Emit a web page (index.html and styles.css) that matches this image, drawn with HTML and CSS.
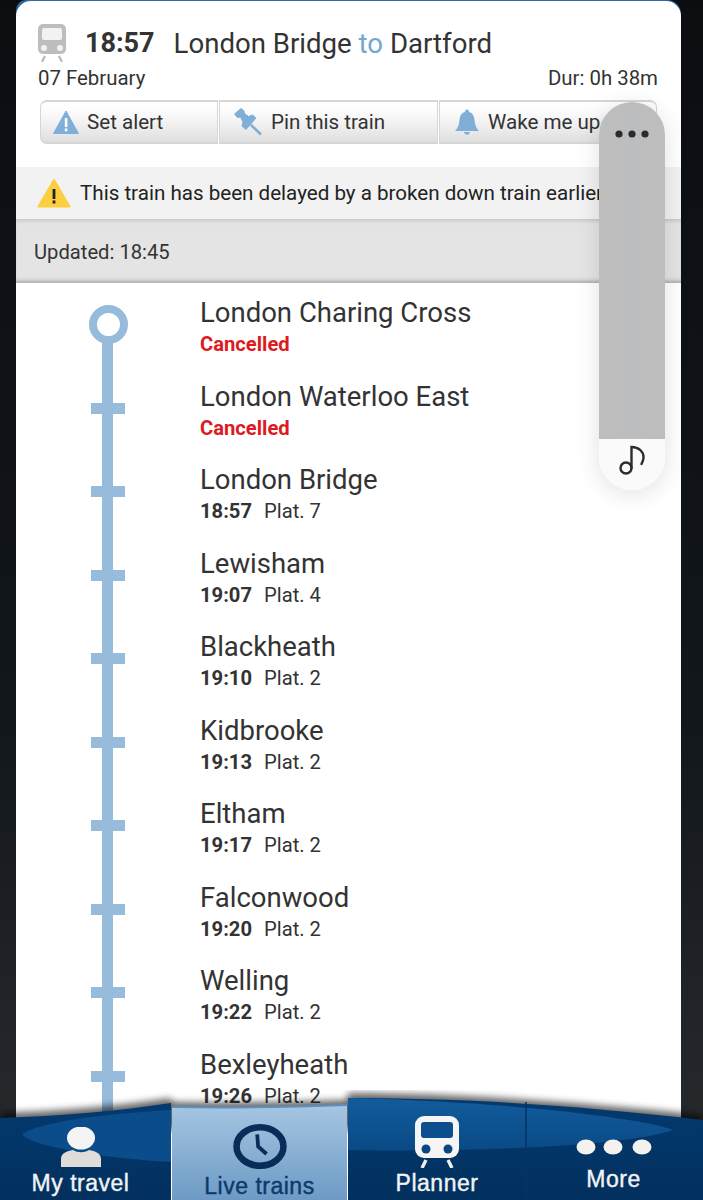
FILE: index.html
```html
<!doctype html>
<html>
    <head>
        <title>Live train</title>
        <meta charset="utf-8">
        <meta name="viewport" content="width=device-width">
        <link rel="stylesheet" href="styles.css">
    </head>

    <body>
        <div class="shell">
            <div class="card">
                <header class="head">
                    <div class="title-row">
                        <svg class="train-icon" viewBox="0 0 28 38" width="28" height="38">
                            <rect x="0" y="0" width="28" height="30" rx="5" fill="#bdbdbd"/>
                            <rect x="4" y="4" width="20" height="12" rx="2" fill="#f2f2f2"/>
                            <circle cx="6" cy="24" r="3" fill="#f2f2f2"/>
                            <circle cx="22" cy="24" r="3" fill="#f2f2f2"/>
                            <path d="M7 32 L4 38 M21 32 L24 38" stroke="#bdbdbd" stroke-width="2.4" fill="none"/>
                        </svg>
                        <strong class="dep-time">18:57</strong>
                        <span class="route">London Bridge <span class="to">to</span> Dartford</span>
                    </div>
                    <div class="date-row">
                        <span>07 February</span>
                        <span>Dur: 0h 38m</span>
                    </div>
                    <div class="actions">
                        <div class="action action-alert">
                            <svg viewBox="0 0 26 24" width="26" height="24">
                                <path d="M13 1 L25.5 23.5 H0.5 Z" fill="#7fafd6" stroke="#7fafd6" stroke-linejoin="round"/>
                                <rect x="11.8" y="8" width="2.6" height="9" fill="#fff"/>
                                <rect x="11.8" y="18.5" width="2.6" height="2.8" fill="#fff"/>
                            </svg>
                            <span>Set alert</span>
                        </div>
                        <div class="action action-pin">
                            <svg viewBox="0 0 28 28" width="28" height="28">
                                <path d="M7 0.5 L0.5 6 L3.5 9.5 L6.5 9 L9 14 L8 18 L12 21.5 L22 10 L18.5 7 L14.5 8.5 L10.5 5.5 L10 3 Z" fill="#7fafd6" stroke="#7fafd6" stroke-linejoin="round"/>
                                <path d="M17 17 L27 26.5" stroke="#7fafd6" stroke-width="2.6" fill="none"/>
                            </svg>
                            <span>Pin this train</span>
                        </div>
                        <div class="action action-wake">
                            <svg viewBox="0 0 26 26" width="26" height="26">
                                <path d="M13 0.5 C11.5 0.5 11 1.6 11 3 C7 4 6 7 5.5 11 C5 16 4 19 1 22 H25 C22 19 21 16 20.5 11 C20 7 19 4 15 3 C15 1.6 14.5 0.5 13 0.5 Z" fill="#7fafd6"/>
                                <path d="M10 23 C10.5 26.5 15.5 26.5 16 23 Z" fill="#7fafd6"/>
                            </svg>
                            <span>Wake me up</span>
                        </div>
                    </div>
                </header>

                <div class="notice">
                    <svg viewBox="0 0 34 30" width="34" height="30">
                        <path d="M17 2 L32.5 28.5 H1.5 Z" fill="#fbcf3e" stroke="#fbcf3e" stroke-width="2" stroke-linejoin="round"/>
                        <rect x="15.6" y="11" width="2.8" height="10" fill="#222"/>
                        <rect x="15.6" y="22.5" width="2.8" height="3" fill="#222"/>
                    </svg>
                    <span>This train has been delayed by a broken down train earlier</span>
                </div>

                <div class="updated">Updated: 18:45</div>

                <div class="stops">
                    <div class="stop stop-first">
                        <div class="rail"><div class="ring"></div></div>
                        <div class="stop-info">
                            <div class="stop-name">London Charing Cross</div>
                            <div class="stop-sub cancelled">Cancelled</div>
                        </div>
                    </div>
                    <div class="stop">
                        <div class="rail"><div class="tick"></div></div>
                        <div class="stop-info">
                            <div class="stop-name">London Waterloo East</div>
                            <div class="stop-sub cancelled">Cancelled</div>
                        </div>
                    </div>
                    <div class="stop">
                        <div class="rail"><div class="tick"></div></div>
                        <div class="stop-info">
                            <div class="stop-name">London Bridge</div>
                            <div class="stop-sub"><b>18:57</b> Plat. 7</div>
                        </div>
                    </div>
                    <div class="stop">
                        <div class="rail"><div class="tick"></div></div>
                        <div class="stop-info">
                            <div class="stop-name">Lewisham</div>
                            <div class="stop-sub"><b>19:07</b> Plat. 4</div>
                        </div>
                    </div>
                    <div class="stop">
                        <div class="rail"><div class="tick"></div></div>
                        <div class="stop-info">
                            <div class="stop-name">Blackheath</div>
                            <div class="stop-sub"><b>19:10</b> Plat. 2</div>
                        </div>
                    </div>
                    <div class="stop">
                        <div class="rail"><div class="tick"></div></div>
                        <div class="stop-info">
                            <div class="stop-name">Kidbrooke</div>
                            <div class="stop-sub"><b>19:13</b> Plat. 2</div>
                        </div>
                    </div>
                    <div class="stop">
                        <div class="rail"><div class="tick"></div></div>
                        <div class="stop-info">
                            <div class="stop-name">Eltham</div>
                            <div class="stop-sub"><b>19:17</b> Plat. 2</div>
                        </div>
                    </div>
                    <div class="stop">
                        <div class="rail"><div class="tick"></div></div>
                        <div class="stop-info">
                            <div class="stop-name">Falconwood</div>
                            <div class="stop-sub"><b>19:20</b> Plat. 2</div>
                        </div>
                    </div>
                    <div class="stop">
                        <div class="rail"><div class="tick"></div></div>
                        <div class="stop-info">
                            <div class="stop-name">Welling</div>
                            <div class="stop-sub"><b>19:22</b> Plat. 2</div>
                        </div>
                    </div>
                    <div class="stop">
                        <div class="rail"><div class="tick"></div></div>
                        <div class="stop-info">
                            <div class="stop-name">Bexleyheath</div>
                            <div class="stop-sub"><b>19:26</b> Plat. 2</div>
                        </div>
                    </div>
                </div>
            </div>
        </div>

        <!-- floating overlay on top of the page -->
        <div class="bubble">
            <div class="bubble-top">
                <svg viewBox="0 0 36 10" width="36" height="10">
                    <circle cx="5" cy="5" r="3.6" fill="#2b2b2b"/>
                    <circle cx="18" cy="5" r="3.6" fill="#2b2b2b"/>
                    <circle cx="31" cy="5" r="3.6" fill="#2b2b2b"/>
                </svg>
            </div>
            <div class="bubble-bottom">
                <svg viewBox="0 0 26 30" width="26" height="30">
                    <circle cx="7" cy="23" r="5.5" fill="none" stroke="#2b2b2b" stroke-width="2.4"/>
                    <path d="M12.5 23 V2 C20 2 25 7 24.5 13 C24.3 15.5 23.5 17 22.5 19" fill="none" stroke="#2b2b2b" stroke-width="2.4" stroke-linecap="round"/>
                </svg>
            </div>
        </div>

        <nav class="tabbar">
            <svg class="tabbar-bg" viewBox="0 0 703 110" width="703" height="110">
                <defs>
                    <linearGradient id="navy" x1="0" y1="0" x2="0" y2="1">
                        <stop offset="0" stop-color="#033a70"/>
                        <stop offset="1" stop-color="#02305e"/>
                    </linearGradient>
                    <linearGradient id="gloss" x1="0" y1="0" x2="0" y2="1">
                        <stop offset="0" stop-color="#125c9c"/>
                        <stop offset="1" stop-color="#0a4a86"/>
                    </linearGradient>
                    <linearGradient id="sky" x1="0" y1="0" x2="0" y2="1">
                        <stop offset="0" stop-color="#a6c6e2"/>
                        <stop offset="1" stop-color="#6d9ac5"/>
                    </linearGradient>
                    <filter id="soft" x="-5%" y="-40%" width="110%" height="180%">
                        <feGaussianBlur stdDeviation="3.5"/>
                    </filter>
                </defs>
                <path d="M0 23 C60 21 120 16 171 8 L172 12 C230 13 290 12 347 10 L348 3 C450 3 570 11 703 25 V40 H0 Z" fill="#000" opacity="0.6" filter="url(#soft)"/>
                <path d="M0 28 C60 26 120 21 171 13 V110 H0 Z" fill="url(#navy)"/>
                <path d="M171 20 C100 24 40 32 22 44 C30 56 100 68 171 72 Z" fill="#0b4c8a"/>
                <path d="M348 8 C450 8 570 14 703 30 V110 H348 Z" fill="url(#navy)"/>
                <path d="M348 60 C450 62 620 58 673 40 C650 30 520 12 348 8 Z" fill="url(#gloss)"/>
                <path d="M172 17 C230 18 290 17 347 15 V110 H172 Z" fill="url(#sky)"/>
                <path d="M172 17 C230 18 290 17 347 15" fill="none" stroke="#5f8fbd" stroke-width="2"/>
                <path d="M526 12 V110" stroke="#03356a" stroke-width="2" opacity="0.8"/>
            </svg>
            <div class="tab tab-travel">
                <svg viewBox="0 0 42 40" width="42" height="40">
                    <ellipse cx="21" cy="11" rx="14" ry="11.5" fill="#f4f4f4"/>
                    <path d="M1 40 V32 C1 26 7 24 13 23 C18 26 24 26 29 23 C35 24 41 26 41 32 V40 Z" fill="#dfdcda"/>
                </svg>
                <span>My travel</span>
            </div>
            <div class="tab tab-live">
                <svg viewBox="0 0 58 48" width="58" height="48">
                    <ellipse cx="29" cy="24" rx="25" ry="20.5" fill="none" stroke="#0a2c58" stroke-width="7"/>
                    <path d="M26 11 L27 24 L36 32" fill="none" stroke="#0a2c58" stroke-width="4"/>
                </svg>
                <span>Live trains</span>
            </div>
            <div class="tab tab-planner">
                <svg viewBox="0 0 46 52" width="46" height="52">
                    <rect x="1" y="0" width="44" height="42" rx="9" fill="#f5f5f5"/>
                    <rect x="7" y="6" width="32" height="16" rx="3" fill="#0c4f8f"/>
                    <circle cx="12" cy="33" r="4.5" fill="#0c4680"/>
                    <circle cx="34" cy="33" r="4.5" fill="#0c4680"/>
                    <path d="M12 44 L8 52 M34 44 L38 52" stroke="#f0f0f0" stroke-width="3.4" fill="none"/>
                </svg>
                <span>Planner</span>
            </div>
            <div class="tab tab-more">
                <svg viewBox="0 0 76 16" width="76" height="16">
                    <ellipse cx="10" cy="8" rx="9.5" ry="7.5" fill="#f4f2ee"/>
                    <ellipse cx="37" cy="8" rx="9.5" ry="7.5" fill="#f4f2ee"/>
                    <ellipse cx="66" cy="8" rx="9.5" ry="7.5" fill="#f4f2ee"/>
                </svg>
                <span>More</span>
            </div>
        </nav>
    </body>
</html>
```

FILE: styles.css
```css
html, body {
    margin: 0;
    height: 1200px;
    overflow: hidden;
}
body {
    position: relative;
    width: 703px;
    background: linear-gradient(#0b0d11, #12171c 60%, #2a2c2f);
    font-family: Roboto, "Liberation Sans", sans-serif;
    color: #333;
}
.shell {
    width: 665px;
    margin-left: 16px;
    padding-top: 1px;
    background: linear-gradient(#33689c 0, #2368ad 18px, #fff 18px);
    border-radius: 10px 14px 0 0;
}
.card {
    background: white;
    border-radius: 15px 15px 0 0;
    height: 1199px;
}
.head {
    height: 166px;
    padding: 0 23px 0 22px;
    box-sizing: border-box;
}
.title-row {
    display: flex;
    align-items: center;
    height: 62px;
    padding-top: 22px;
    box-sizing: border-box;
}
.train-icon {
    margin-right: 19px;
}
.dep-time {
    font-size: 27px;
    font-weight: 700;
    margin-right: 19px;
}
.route {
    font-size: 27.6px;
}
.to {
    color: #74a7cf;
}
.date-row {
    display: flex;
    justify-content: space-between;
    font-size: 20.4px;
    line-height: 30px;
    height: 30px;
    margin-bottom: 7px;
}
.actions {
    display: flex;
    gap: 1px;
    margin-left: 2px;
    width: 617px;
    height: 44px;
}
.action {
    display: flex;
    align-items: center;
    gap: 8px;
    box-sizing: border-box;
    font-size: 20.6px;
    background: linear-gradient(#fff, #fafafa 30%, #dfdfdf);
    border: 2px solid #d6d6d6;
    border-left-width: 1px;
    border-right-width: 1px;
    color: #333;
}
.action-alert {
    width: 178px;
    padding-left: 12px;
    border-radius: 7px 0 0 7px;
}
.action-pin {
    width: 219px;
    padding-left: 14px;
    gap: 9px;
}
.action-wake {
    width: 218px;
    padding-left: 14px;
    border-radius: 0 7px 7px 0;
}
.notice {
    display: flex;
    align-items: center;
    gap: 9px;
    height: 52px;
    padding-left: 21px;
    background: #f2f2f2;
    font-size: 20.6px;
    white-space: nowrap;
    overflow: hidden;
    color: #222;
}
.updated {
    display: flex;
    align-items: center;
    height: 64px;
    box-sizing: border-box;
    padding: 2px 0 0 18px;
    font-size: 20.2px;
    background: #e4e4e4;
    box-shadow: inset 0 5px 5px -4px #bbb, inset 0 -5px 4px -3px #a6a6a6;
}
.stops {
    height: 840px;
    overflow: hidden;
    background: linear-gradient(#97bbdb, #97bbdb) 86px 42px / 11px 100% no-repeat;
}
.stop {
    display: flex;
    height: 83.5px;
}
.rail {
    display: flex;
    align-items: center;
    justify-content: center;
    width: 184px;
}
.ring {
    width: 23px;
    height: 23px;
    border: 8px solid #97bbdb;
    border-radius: 50%;
    background: white;
}
.tick {
    width: 34px;
    height: 11px;
    background: #97bbdb;
}
.stop-info {
    padding-top: 14px;
}
.stop-name {
    font-size: 27.5px;
    line-height: 32px;
}
.stop-sub {
    font-size: 20.2px;
    line-height: 30px;
}
.stop-sub b {
    margin-right: 7px;
}
.cancelled {
    color: #dd1a22;
    font-weight: 700;
}
.bubble {
    position: absolute;
    left: 599px;
    top: 102px;
    width: 66px;
    height: 388px;
    border-radius: 33px;
    overflow: hidden;
    box-shadow: 0 4px 24px rgba(0, 0, 0, 0.12);
}
.bubble-top {
    height: 337px;
    box-sizing: border-box;
    padding: 27px 15px 0;
    background: linear-gradient(90deg, #bebebe, #bcbdbe 50%, #bebebe);
}
.bubble-top svg {
    display: block;
}
.bubble-bottom {
    display: flex;
    justify-content: center;
    height: 51px;
    box-sizing: border-box;
    padding-top: 6px;
    background: #fafafa;
}
.tabbar {
    position: absolute;
    left: 0;
    bottom: 0;
    width: 703px;
    height: 105px;
    display: flex;
    font-family: "Liberation Sans", Arial, sans-serif;
    font-size: 23px;
    letter-spacing: 0.5px;
    -webkit-text-stroke: 0.4px currentColor;
    color: #f1f3f5;
}
.tabbar-bg {
    position: absolute;
    left: 0;
    bottom: 0;
}
.tab {
    position: relative;
    display: flex;
    flex-direction: column;
    align-items: center;
    box-sizing: border-box;
}
.tab-travel {
    width: 171px;
    padding: 32px 10px 0 0;
    gap: 3px;
}
.tab-live {
    width: 177px;
    padding-top: 29px;
    gap: 4px;
    color: #0c3a6b;
}
.tab-planner {
    width: 178px;
    padding-top: 21px;
    gap: 2px;
}
.tab-more {
    width: 177px;
    padding: 44px 2px 0 0;
    gap: 11px;
}
```
